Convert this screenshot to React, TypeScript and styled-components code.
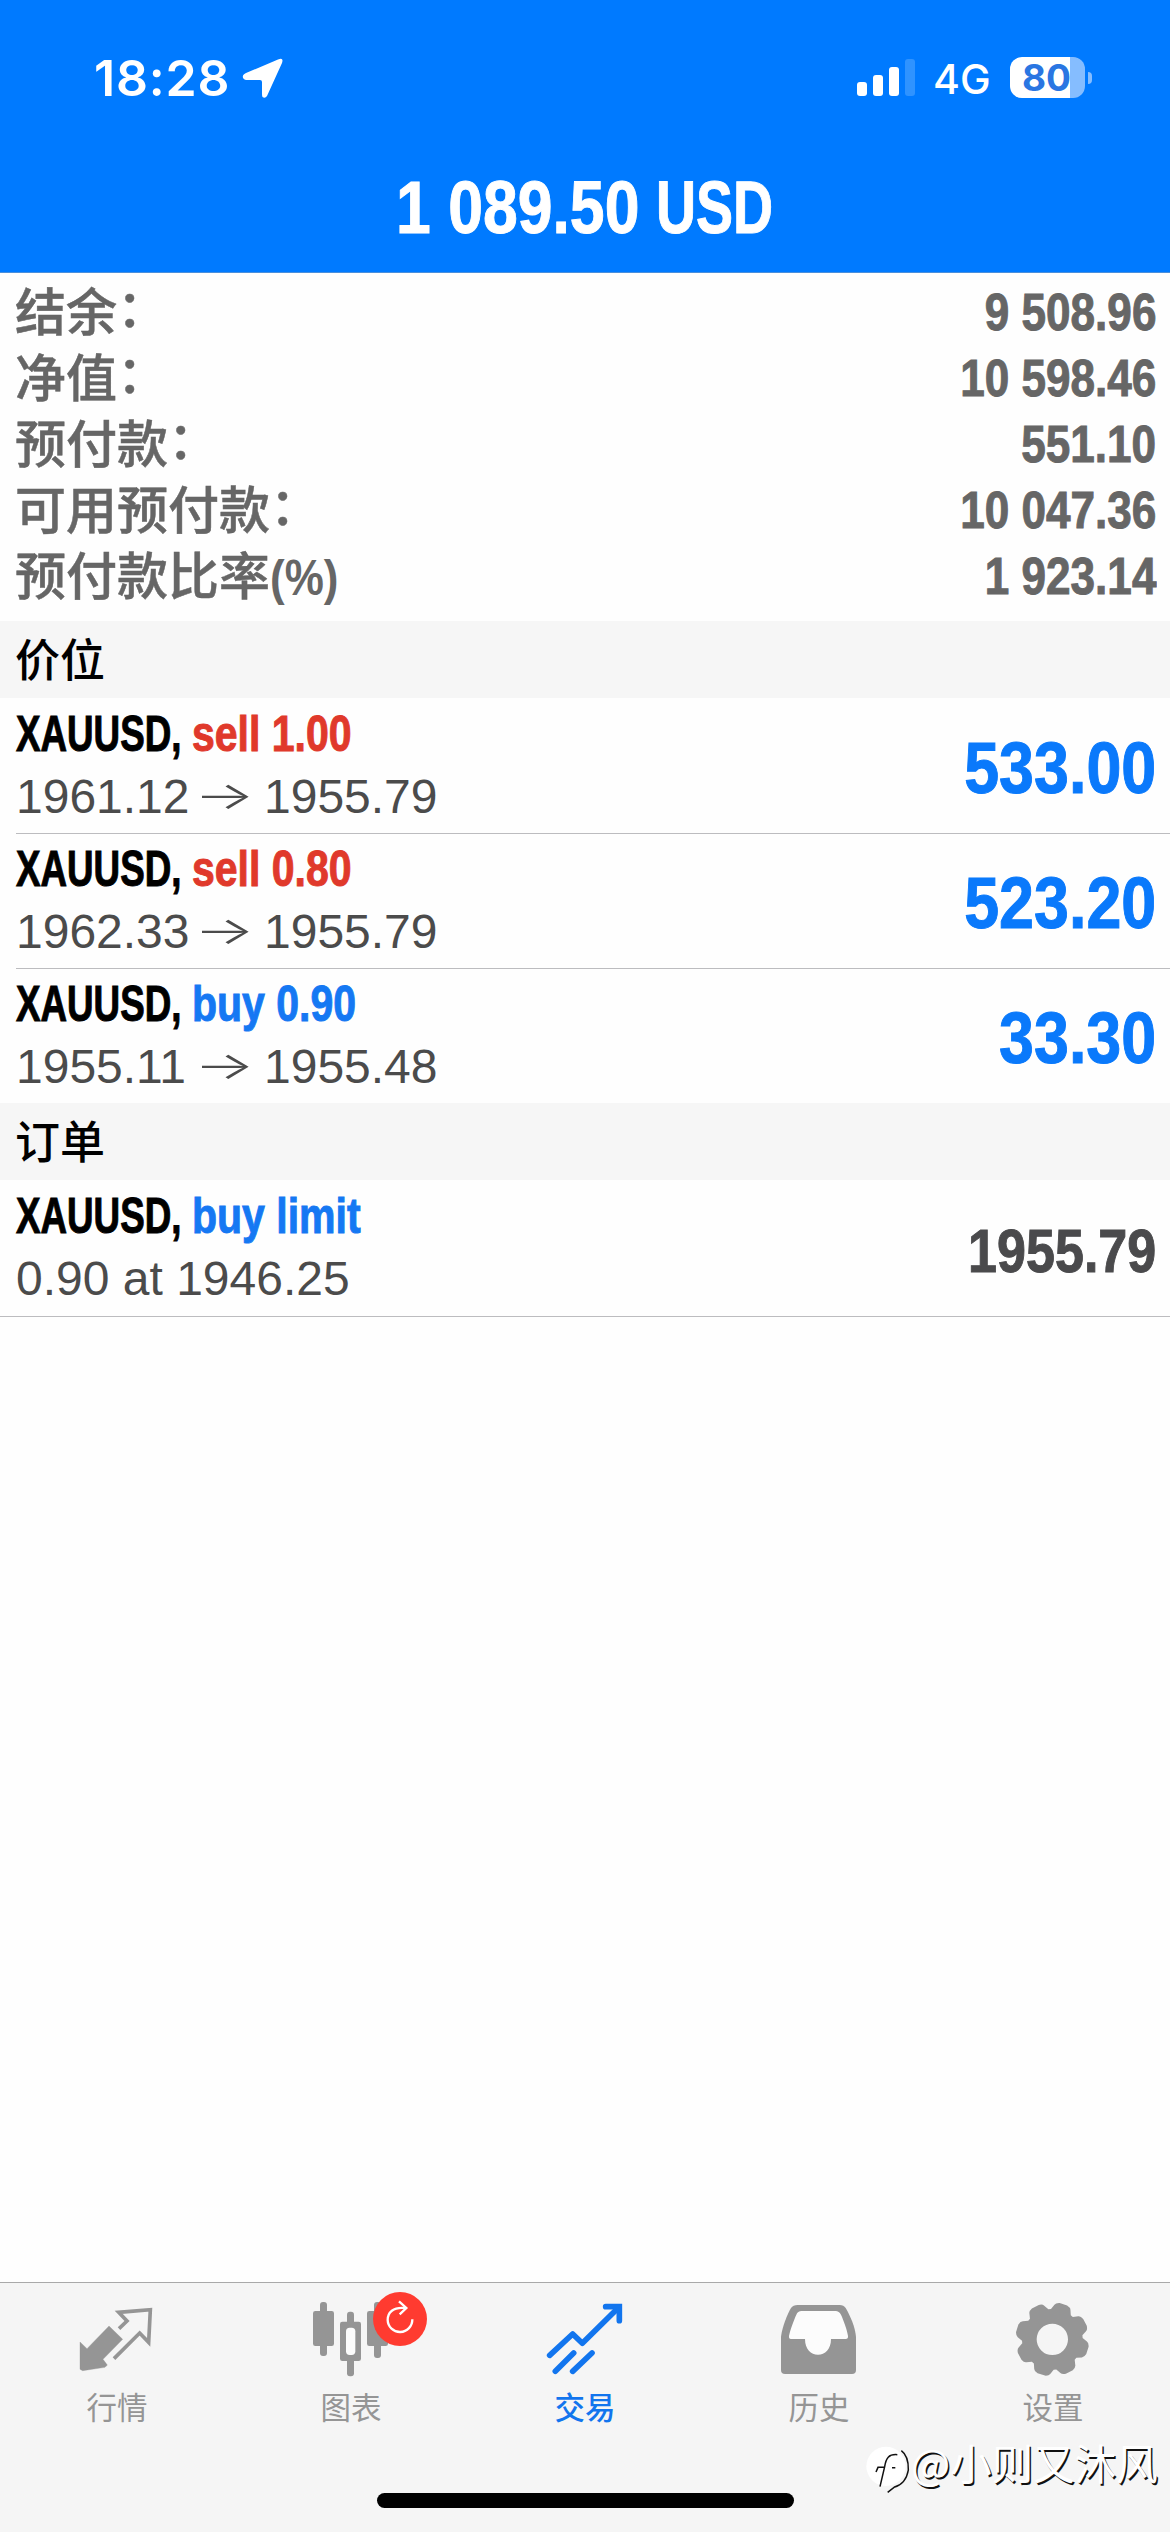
import React from "react";
import styled, { createGlobalStyle } from "styled-components";

const SANS = `"Liberation Sans", "Noto Sans CJK SC", sans-serif`;
const BLUE = "#0a79fb";

const Global = createGlobalStyle`
  *, *::before, *::after { box-sizing: border-box; }
  body { margin: 0; background: #fff; font-family: ${SANS}; }
`;

const Screen = styled.div`
  position: relative;
  width: 1170px;
  height: 2532px;
  display: flex;
  flex-direction: column;
  overflow: hidden;
  background: #fefefe;
`;

/* Horizontally compressed text; $width is the room it takes in its line. */
const Narrow = styled.span<{
  $size: number;
  $scale: number;
  $width?: number;
  $end?: boolean;
  $color?: string;
  $stroke?: number;
}>`
  display: inline-block;
  flex: none;
  width: ${(p) => (p.$width ? `${p.$width}px` : "auto")};
  font-size: ${(p) => p.$size}px;
  font-weight: 700;
  color: ${(p) => p.$color ?? "inherit"};
  white-space: nowrap;
  transform: scaleX(${(p) => p.$scale});
  transform-origin: ${(p) => (p.$end ? "right" : "left")} center;
  -webkit-text-stroke: ${(p) => p.$stroke ?? 1}px currentColor;
`;

const Header = styled.header`
  flex: none;
  height: 273px;
  background: #007aff;
  border-bottom: 1px solid #4a8fdc;
  color: #fff;
`;

const StatusBar = styled.div`
  height: 141px;
  padding: 57px 78px 0 94px;
  display: flex;
  justify-content: space-between;
  font-family: Inter, sans-serif;
`;

const StatusGroup = styled.div`
  display: flex;
  align-items: flex-start;
  height: 42px;
  line-height: 42px;
`;

const Clock = styled.span`
  width: 148px;
  font-size: 50px;
  font-weight: 600;
  letter-spacing: 0.8px;
`;

const Network = styled.span`
  width: 56px;
  margin: 2px 21px 0 17px;
  font-size: 41px;
  font-weight: 500;
  line-height: 41px;
`;

const Battery = styled.div`
  width: 75px;
  height: 41px;
  border-radius: 12px;
  background: linear-gradient(to right, #fff 60px, #85bdff 60px);
  color: #2a76e2;
  font-size: 37px;
  font-weight: 700;
  line-height: 41px;
  padding-left: 12px;
`;

const BatteryTip = styled.div`
  width: 4px;
  height: 12px;
  margin: 15px 0 0 3px;
  border-radius: 0 5px 5px 0;
  background: #85bdff;
`;

const Title = styled.div`
  height: 131px;
  padding-left: 396px;
  display: flex;
  line-height: 134px;
`;

const Summary = styled.section`
  flex: none;
  height: 348px;
  padding: 6px 14px 0 15px;
  color: #666;
`;

const SummaryRow = styled.div`
  height: 66px;
  line-height: 66px;
  display: flex;
  justify-content: space-between;
`;

const SummaryLabel = styled.span`
  height: 66px;
  font-size: 51px;
  font-weight: 500;
  line-height: 70px;
  white-space: nowrap;
  -webkit-text-stroke: 0.5px currentColor;
`;

const Colon = styled.span`
  position: relative;
  top: -4px;
`;

const SectionTitle = styled.h2`
  flex: none;
  height: 77px;
  margin: 0;
  padding-left: 15px;
  background: #f6f6f6;
  color: #000;
  font-size: 45px;
  font-weight: 500;
  line-height: 81px;
`;

const List = styled.div`
  flex: none;
  padding-left: 16px;
`;

const Row = styled.div`
  height: 135px;
  padding-right: 14px;
  border-top: 1px solid #bcbcbf;
  display: flex;
  justify-content: space-between;
  &:first-child { border-top-color: transparent; }
`;

const RowText = styled.div`
  padding-top: 4px;
`;

const Line = styled.div`
  display: flex;
  height: 63px;
  line-height: 63px;
  color: #000;
`;

const Detail = styled(Line)`
  font-size: 48px;
  line-height: 62px;
  color: #4b4b4b;
`;

const Price = styled.span`
  width: 178px;
`;

const Arrow = styled.span`
  width: 70px;
  font-family: Inter, sans-serif;
  font-weight: 300;
  font-size: 38px;
  line-height: 59px;
  transform: scaleX(1.68);
  transform-origin: left center;
`;

const Result = styled.div`
  padding-top: 1px;
  line-height: 137px;
`;

const EndLine = styled.hr`
  flex: none;
  width: 100%;
  height: 1px;
  margin: 1px 0 0;
  border: 0;
  background: #bcbcbf;
`;

const Spacer = styled.div`
  flex: 1;
`;

const TabBar = styled.nav`
  flex: none;
  height: 250px;
  border-top: 1px solid #a9a9a9;
  background: #f5f5f5;
`;

const Tabs = styled.div`
  display: grid;
  grid-template-columns: repeat(5, 1fr);
`;

const Tab = styled.div<{ $active?: boolean }>`
  position: relative;
  height: 144px;
  padding-top: 17px;
  display: flex;
  flex-direction: column;
  align-items: center;
  gap: 10px;
  color: ${(p) => (p.$active ? "#1275ee" : "#959595")};
`;

const TabLabel = styled.span<{ $active?: boolean }>`
  font-size: 30.5px;
  font-weight: ${(p) => (p.$active ? 500 : 400)};
  line-height: 40px;
`;

const TabIcon = styled.svg`
  width: 80px;
  height: 78px;
  fill: currentColor;
  overflow: visible;
`;

const Badge = styled.div`
  position: absolute;
  left: 139px;
  top: 9px;
  width: 54px;
  height: 54px;
  border-radius: 50%;
  background: #ff3b30;
`;

const HomeIndicator = styled.div`
  width: 417px;
  height: 15px;
  margin: 66px auto 0;
  border-radius: 8px;
  background: #000;
`;

const Watermark = styled.div`
  position: absolute;
  left: 866px;
  top: 2440px;
  height: 54px;
  display: flex;
  align-items: center;
  color: #fff;
  font-family: "Noto Sans CJK SC", sans-serif;
`;

const WatermarkText = styled.span`
  height: 54px;
  margin-left: -3px;
  font-size: 41.5px;
  font-weight: 400;
  line-height: 44px;
  white-space: nowrap;
  text-shadow: 1.5px 1.5px 0 #111;
`;

const gearPath = (() => {
  const at = (deg: number, r: number) => {
    const a = (deg * Math.PI) / 180;
    return `${(118 + r * Math.sin(a)).toFixed(1)} ${(118 - r * Math.cos(a)).toFixed(1)}`;
  };
  let d = "";
  for (let k = 0; k < 8; k++) {
    const c = 17.5 + 45 * k;
    d += `${k ? "L" : "M"}${at(c - 20, 91)}L${at(c - 14, 104)}Q${at(c - 12, 110)} ${at(c - 6, 111)}L${at(c + 6, 111)}Q${at(c + 12, 110)} ${at(c + 14, 104)}L${at(c + 20, 91)}`;
  }
  return `${d}ZM71 118a47 47 0 1 0 94 0a47 47 0 1 0-94 0Z`;
})();

const QuotesIcon = () => (
  <TabIcon viewBox="0 0 240 234">
    <path
      d="M9 126L30 146L96 78L137 118L78 178L91 195L84 202L17 212L9 208Z"
      stroke="currentColor"
      strokeWidth="1"
      strokeLinejoin="round"
    />
    <path d="M126 86L150 63L125 37L220 29L215 127L188 99L111 176" fill="none" stroke="currentColor" strokeWidth="11" />
  </TabIcon>
);

const ChartIcon = () => (
  <TabIcon viewBox="0 0 240 234">
    <rect x="6" y="33" width="63" height="105" rx="7" />
    <rect x="27" y="6" width="21" height="162" rx="9" />
    <rect x="87" y="65" width="63" height="118" rx="7" />
    <rect x="108" y="35" width="21" height="194" rx="9" />
    <rect x="105" y="83" width="28" height="82" rx="11" fill="#fcfcfc" />
    <rect x="168" y="33" width="63" height="105" rx="7" />
    <rect x="189" y="6" width="21" height="168" rx="9" />
  </TabIcon>
);

const TradeIcon = () => (
  <TabIcon viewBox="0 0 240 234">
    <g fill="none" stroke="currentColor" strokeWidth="17" strokeLinecap="round">
      <path d="M14 166L83 102L112 130L220 23" strokeLinejoin="round" />
      <path d="M182 20H223V62" />
      <path d="M31 214L86 159" />
      <path d="M83 214L141 159" />
    </g>
  </TabIcon>
);

const HistoryIcon = () => (
  <TabIcon viewBox="0 0 240 234">
    <path d="M6 110C10 80 24 45 36 24Q42 15 56 15H182Q194 15 200 24C214 48 228 80 231 110V210Q231 222 219 222H18Q6 222 6 210Z" />
    <path
      fill="#fcfcfc"
      d="M30 108C34 88 44 62 52 44Q56 33 68 33H170Q180 33 186 44C194 62 204 88 207 108Q208 117 200 117H156C156 148 138 164 117 164C96 164 78 148 78 117H36Q29 117 30 108Z"
    />
  </TabIcon>
);

const SettingsIcon = () => (
  <TabIcon viewBox="0 0 240 234">
    <path d={gearPath} fillRule="evenodd" />
  </TabIcon>
);

const tabs = [
  { label: "行情", Icon: QuotesIcon },
  { label: "图表", Icon: ChartIcon, badge: true },
  { label: "交易", Icon: TradeIcon, active: true },
  { label: "历史", Icon: HistoryIcon },
  { label: "设置", Icon: SettingsIcon },
];

const summary = [
  { label: "结余", value: "9 508.96" },
  { label: "净值", value: "10 598.46" },
  { label: "预付款", value: "551.10" },
  { label: "可用预付款", value: "10 047.36" },
  { label: "预付款比率", value: "1 923.14", percent: true },
];

const positions = [
  { side: "sell 1.00", open: "1961.12", now: "1955.79", profit: "533.00" },
  { side: "sell 0.80", open: "1962.33", now: "1955.79", profit: "523.20" },
  { side: "buy 0.90", open: "1955.11", now: "1955.48", profit: "33.30" },
];

const Instrument = ({ side }: { side: string }) => (
  <Line>
    <Narrow $size={50} $scale={0.735} $width={176}>
      XAUUSD,
    </Narrow>
    <Narrow $size={50} $scale={0.82} $color={side.startsWith("sell") ? "#e0392b" : "#1578f3"}>
      {side}
    </Narrow>
  </Line>
);

export default function App() {
  return (
    <Screen>
      <Global />
      <Header>
        <StatusBar>
          <StatusGroup>
            <Clock>18:28</Clock>
            <svg width="41" height="42" viewBox="0 0 41 42" fill="#fff">
              <path d="M36 2.5Q42 0 40 6L25 39Q23 42 20.500 40Q20 39 20 37V25Q20 23 18 23H4Q0 22 1 18.500Q1.500 17 4 16Z" />
            </svg>
          </StatusGroup>
          <StatusGroup>
            <svg width="59" height="42" viewBox="0 0 59 42" fill="#fff">
              <rect x="0" y="25" width="10" height="14" rx="3" />
              <rect x="16" y="18" width="10" height="21" rx="3" />
              <rect x="32" y="10" width="10" height="29" rx="3" />
              <rect x="48" y="2" width="10" height="37" rx="3" fill="#2f93ff" />
            </svg>
            <Network>4G</Network>
            <Battery>80</Battery>
            <BatteryTip />
          </StatusGroup>
        </StatusBar>
        <Title>
          <Narrow $size={74} $scale={0.845} $width={260}>
            1 089.50
          </Narrow>
          <Narrow $size={74} $scale={0.75}>
            USD
          </Narrow>
        </Title>
      </Header>

      <Summary>
        {summary.map((s) => (
          <SummaryRow key={s.label}>
            <SummaryLabel>
              {s.label}
              {s.percent ? (
                <Narrow $size={50} $scale={0.88} $stroke={0}>
                  (%)
                </Narrow>
              ) : (
                <Colon>：</Colon>
              )}
            </SummaryLabel>
            <Narrow $size={52} $scale={0.848} $end>
              {s.value}
            </Narrow>
          </SummaryRow>
        ))}
      </Summary>

      <SectionTitle>价位</SectionTitle>
      <List>
        {positions.map((p) => (
          <Row key={p.side}>
            <RowText>
              <Instrument side={p.side} />
              <Detail>
                <Price>{p.open}</Price>
                <Arrow>→</Arrow>
                <Price>{p.now}</Price>
              </Detail>
            </RowText>
            <Result>
              <Narrow $size={72} $scale={0.872} $end $color={BLUE}>
                {p.profit}
              </Narrow>
            </Result>
          </Row>
        ))}
      </List>

      <SectionTitle>订单</SectionTitle>
      <List>
        <Row>
          <RowText>
            <Instrument side="buy limit" />
            <Detail>0.90 at 1946.25</Detail>
          </RowText>
          <Result>
            <Narrow $size={61.5} $scale={0.847} $end $color="#4a4a4c">
              1955.79
            </Narrow>
          </Result>
        </Row>
      </List>
      <EndLine />
      <Spacer />

      <TabBar>
        <Tabs>
          {tabs.map(({ label, Icon, active, badge }) => (
            <Tab key={label} $active={active}>
              <Icon />
              <TabLabel $active={active}>{label}</TabLabel>
              {badge && (
                <Badge>
                  <svg width="54" height="54" viewBox="0 0 162 162" fill="none" stroke="#fff" strokeWidth="7">
                    <path d="M97 48C60 44 44 62 44 84A37 37 0 0 0 118 82" />
                    <path d="M78 28L100 48L80 67" />
                  </svg>
                </Badge>
              )}
            </Tab>
          ))}
        </Tabs>
        <HomeIndicator />
      </TabBar>

      <Watermark>
        <svg width="48" height="54" viewBox="0 0 144 162">
          <circle cx="60" cy="79" r="59" fill="#fff" />
          <g fill="none" stroke="#111" strokeWidth="4.500">
            <path d="M106 32Q128 48 127 90Q120 132 84 142L65 157" />
            <path d="M94 44C68 42 60 54 56 80L42 140" />
            <path d="M30 96L36 82H56M78 83H88" />
          </g>
        </svg>
        <WatermarkText>@小则又沐风</WatermarkText>
      </Watermark>
    </Screen>
  );
}
